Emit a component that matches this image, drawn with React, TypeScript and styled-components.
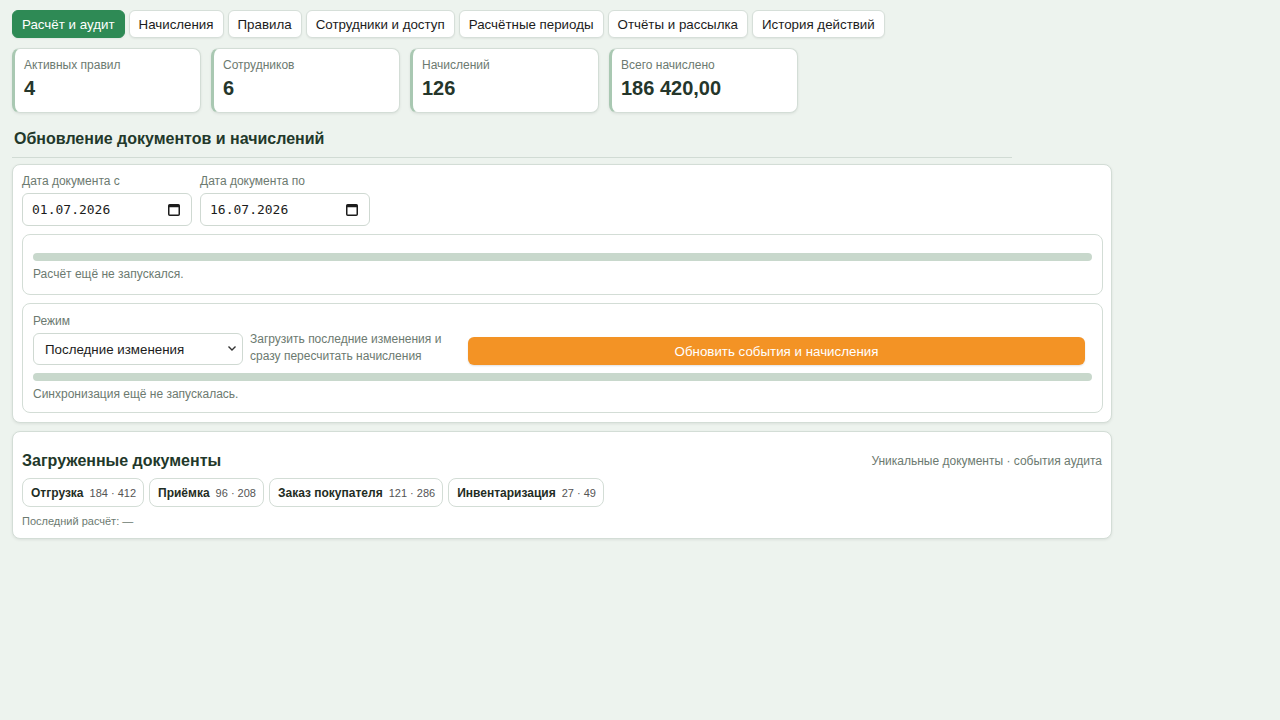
import React from "react";
import styled, { createGlobalStyle } from "styled-components";

const Global = createGlobalStyle`
  html, body { margin: 0; padding: 0; background: #edf3ee; }
  body { font-family: "Liberation Sans", Arial, sans-serif; color: #1f2d24; }
  * { box-sizing: border-box; }
`;

const Page = styled.div`
  padding: 10px 12px;
  width: 1124px;
  display: flex;
  flex-direction: column;
`;

const Tabs = styled.div`
  display: flex;
  gap: 4px;
`;

const Tab = styled.button<{ $active?: boolean }>`
  height: 28px;
  padding: 0 9px;
  border-radius: 6px;
  font-family: inherit;
  font-size: 13.333px;
  border: 1px solid ${(p) => (p.$active ? "#2e8a55" : "#d6dfd9")};
  background: ${(p) => (p.$active ? "#2e8a55" : "#ffffff")};
  color: ${(p) => (p.$active ? "#ffffff" : "#1c1c1c")};
  box-shadow: 0 1px 2px rgba(0,0,0,0.06);
`;

const Stats = styled.div`
  display: flex;
  gap: 10px;
  margin-top: 10px;
`;

const StatCard = styled.div`
  width: 189px;
  height: 65px;
  background: #fff;
  border: 1px solid #d3ddd6;
  border-left: 3px solid #a9c8b2;
  border-radius: 8px;
  padding: 9px 10px 0 9px;
  box-shadow: 0 1px 3px rgba(0,0,0,0.08);
`;

const StatLabel = styled.div`
  font-size: 12px;
  color: #6c7a70;
  line-height: 14px;
`;

const StatValue = styled.div`
  font-size: 20px;
  font-weight: 700;
  color: #25362b;
  margin-top: 4px;
  line-height: 24px;
`;

const SectionTitle = styled.h2`
  margin: 16px 0 0 2px;
  font-size: 16px;
  font-weight: 700;
  color: #22382a;
  line-height: 20px;
`;

const Divider = styled.div`
  width: 1000px;
  height: 1px;
  background: #d1dbd4;
  margin-top: 8px;
`;

const Panel = styled.div`
  margin-top: 6px;
  background: #fff;
  border: 1px solid #d3ddd6;
  border-radius: 8px;
  padding: 9px 8px 9px 9px;
  box-shadow: 0 1px 3px rgba(0,0,0,0.08);
  display: flex;
  flex-direction: column;
  gap: 8px;
`;

const DateRow = styled.div`
  display: flex;
  gap: 8px;
`;

const Field = styled.div`
  display: flex;
  flex-direction: column;
  gap: 5px;
`;

const FieldLabel = styled.span`
  font-size: 12px;
  color: #6c7a70;
  line-height: 14px;
`;

const DateBox = styled.div`
  width: 170px;
  height: 33px;
  border: 1px solid #cfd9d2;
  border-radius: 6px;
  padding: 0 11px 0 9px;
  display: flex;
  align-items: center;
  justify-content: space-between;
  background: #fff;
`;

const DateText = styled.span`
  font-family: "DejaVu Sans Mono", monospace;
  font-size: 13px;
  color: #1c1c1c;
`;

const InnerBox = styled.div<{ $top: number; $bottom: number }>`
  border: 1px solid #d3ddd6;
  border-radius: 8px;
  padding: ${(p) => p.$top}px 10px ${(p) => p.$bottom}px 10px;
  display: flex;
  flex-direction: column;
`;

const Bar = styled.div<{ $gap?: number }>`
  height: 8px;
  border-radius: 4px;
  background: #c8d8cc;
  margin-top: ${(p) => p.$gap ?? 0}px;
`;

const Note = styled.div`
  font-size: 12px;
  color: #6c7a70;
  line-height: 14px;
  margin-top: 6px;
`;

const ModeRow = styled.div`
  display: flex;
  align-items: flex-end;
  gap: 7px;
  margin-top: 3px;
`;

const SelectWrap = styled.div`
  position: relative;
  width: 210px;
  height: 32px;
`;

const Select = styled.select`
  width: 100%;
  height: 100%;
  appearance: none;
  border: 1px solid #cfd9d2;
  border-radius: 6px;
  padding: 0 24px 0 11px;
  font-family: inherit;
  font-size: 13.333px;
  color: #1c1c1c;
  background: #fff;
`;

const Chevron = styled.svg`
  position: absolute;
  right: 6px;
  top: 12px;
  pointer-events: none;
`;

const ModeHint = styled.div`
  width: 200px;
  font-size: 12px;
  line-height: 17px;
  color: #6c7a70;
`;

const ActionButton = styled.button`
  flex: 1;
  margin-left: 11px;
  margin-right: 7px;
  height: 28px;
  border: none;
  border-radius: 6px;
  background: #f39325;
  color: #fff;
  font-family: inherit;
  font-size: 13.333px;
  box-shadow: 0 1px 2px rgba(0,0,0,0.12);
`;

const DocsPanel = styled.div`
  margin-top: 8px;
  background: #fff;
  border: 1px solid #d3ddd6;
  border-radius: 8px;
  padding: 19px 9px 11px 9px;
  box-shadow: 0 1px 3px rgba(0,0,0,0.08);
`;

const DocsHeader = styled.div`
  display: flex;
  justify-content: space-between;
  align-items: center;
`;

const DocsTitle = styled.h3`
  margin: 0;
  font-size: 16px;
  font-weight: 700;
  color: #22382a;
  line-height: 20px;
`;

const DocsMeta = styled.span`
  font-size: 12px;
  color: #6c7a70;
`;

const Chips = styled.div`
  display: flex;
  gap: 5px;
  margin-top: 7px;
`;

const Chip = styled.div`
  height: 29px;
  display: flex;
  align-items: center;
  gap: 6px;
  padding: 0 7px 0 8px;
  border: 1px solid #d3ddd6;
  border-radius: 8px;
  font-size: 11px;
  color: #555;
`;

const ChipName = styled.b`
  font-size: 12px;
  color: #1f2d24;
`;

const Footer = styled.div`
  font-size: 11px;
  color: #6c7a70;
  margin-top: 8px;
`;

const tabs = [
  "Расчёт и аудит",
  "Начисления",
  "Правила",
  "Сотрудники и доступ",
  "Расчётные периоды",
  "Отчёты и рассылка",
  "История действий",
];

const stats = [
  ["Активных правил", "4"],
  ["Сотрудников", "6"],
  ["Начислений", "126"],
  ["Всего начислено", "186 420,00"],
];

const docs = [
  ["Отгрузка", "184 · 412"],
  ["Приёмка", "96 · 208"],
  ["Заказ покупателя", "121 · 286"],
  ["Инвентаризация", "27 · 49"],
];

const CalendarIcon = () => (
  <svg width="12" height="13" viewBox="0 0 12 13">
    <rect x="0.75" y="1.75" width="10.5" height="10.5" rx="1" fill="none" stroke="#1c1c1c" strokeWidth="1.5" />
    <rect x="0.75" y="1.75" width="10.5" height="2.5" fill="#1c1c1c" />
  </svg>
);

function DateField({ label, value }: { label: string; value: string }) {
  return (
    <Field>
      <FieldLabel>{label}</FieldLabel>
      <DateBox>
        <DateText>{value}</DateText>
        <CalendarIcon />
      </DateBox>
    </Field>
  );
}

export default function App() {
  return (
    <>
      <Global />
      <Page>
        <Tabs>
          {tabs.map((t, i) => (
            <Tab key={t} $active={i === 0}>{t}</Tab>
          ))}
        </Tabs>
        <Stats>
          {stats.map(([l, v]) => (
            <StatCard key={l}>
              <StatLabel>{l}</StatLabel>
              <StatValue>{v}</StatValue>
            </StatCard>
          ))}
        </Stats>
        <SectionTitle>Обновление документов и начислений</SectionTitle>
        <Divider />
        <Panel>
          <DateRow>
            <DateField label="Дата документа с" value="01.07.2026" />
            <DateField label="Дата документа по" value="16.07.2026" />
          </DateRow>
          <InnerBox $top={18} $bottom={13}>
            <Bar />
            <Note>Расчёт ещё не запускался.</Note>
          </InnerBox>
          <InnerBox $top={10} $bottom={11}>
            <FieldLabel>Режим</FieldLabel>
            <ModeRow>
              <SelectWrap>
                <Select defaultValue="last">
                  <option value="last">Последние изменения</option>
                </Select>
                <Chevron width="10" height="7" viewBox="0 0 10 7">
                  <path d="M1.5 1.5 L5 5 L8.5 1.5" fill="none" stroke="#333" strokeWidth="1.4" />
                </Chevron>
              </SelectWrap>
              <ModeHint>Загрузить последние изменения и сразу пересчитать начисления</ModeHint>
              <ActionButton>Обновить события и начисления</ActionButton>
            </ModeRow>
            <Bar $gap={8} />
            <Note>Синхронизация ещё не запускалась.</Note>
          </InnerBox>
        </Panel>
        <DocsPanel>
          <DocsHeader>
            <DocsTitle>Загруженные документы</DocsTitle>
            <DocsMeta>Уникальные документы · события аудита</DocsMeta>
          </DocsHeader>
          <Chips>
            {docs.map(([n, c]) => (
              <Chip key={n}>
                <ChipName>{n}</ChipName>
                <span>{c}</span>
              </Chip>
            ))}
          </Chips>
          <Footer>Последний расчёт: —</Footer>
        </DocsPanel>
      </Page>
    </>
  );
}
